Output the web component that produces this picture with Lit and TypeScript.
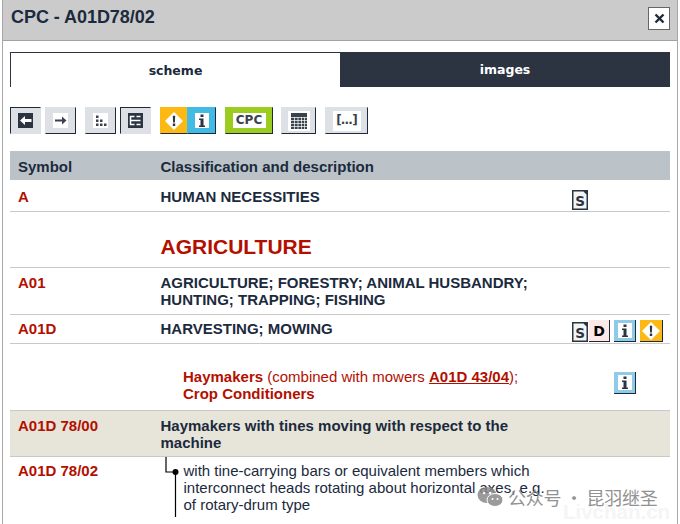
import { LitElement, html, css, svg } from "lit";
import { customElement } from "lit/decorators.js";

const arrowL = svg`<svg width="15" height="15" viewBox="0 0 15 15"><rect width="15" height="15" fill="#2b3440"/><path d="M2 7.500l5-4.500v3h6.500v3H7v3z" fill="#fff"/></svg>`;
const arrowR = svg`<svg width="15" height="15" viewBox="0 0 15 15"><rect width="15" height="15" fill="#fff"/><path d="M13.500 7.500L9 3.500v3H2v2h7v3z" fill="#3a424d"/></svg>`;
const dots = svg`<svg width="15" height="15" viewBox="0 0 15 15"><rect width="15" height="15" fill="#fff"/><path d="M3 2.500h2.500V5H3zM3 6.500h2.500V9H3zM3 10.500h2.500V13H3zM7 6.500h2.500V9H7zM7 10.500h2.500V13H7zM11 10.500h2.500V13H11z" fill="#3a424d"/></svg>`;
const tree = svg`<svg width="15" height="15" viewBox="0 0 15 15"><rect width="15" height="15" fill="#2b3440"/><path d="M2.500 3v9M2 3.500h4.500M2 7.500h10.500M2 11.500h4.500M8.500 3.500h4M8.500 11.500h4" fill="none" stroke="#fff" stroke-width="1.500"/></svg>`;
const warn = svg`<svg width="18" height="18" viewBox="0 0 18 18"><path d="M9 0l9 9-9 9-9-9z" fill="#fff"/><path d="M7.800 3.800h2.400l-.3 6.700H8.100zM7.800 11.600h2.400V14H7.800z" fill="#2b3440"/></svg>`;
const info = svg`<svg width="14" height="15" viewBox="0 0 14 15"><rect width="14" height="15" fill="#fff"/><path d="M5.500 1.500h3v2.500h-3zM4 5.500h4.500v7H10V14H4v-1.500h1.500v-5.500H4z" fill="#2b3440"/></svg>`;
const grid = svg`<svg width="22" height="20" viewBox="0 0 22 20"><rect width="22" height="20" fill="#fff"/><rect x="3" y="2" width="16" height="16" fill="#3a424d"/><path d="M3 6.500h16M3 9.500h16M3 12.500h16M3 15.500h16M6.500 6v12M10 6v12M13.500 6v12M16.500 6v12" stroke="#fff" stroke-width=".7"/></svg>`;
const sDoc = svg`<svg width="16" height="20" viewBox="0 0 16 20"><path d="M.75.75h11l3.500 3.500v15H.75z" fill="#f3f5f5" stroke="#2b3440" stroke-width="1.500"/><path d="M11 0h5v5z" fill="#2b3440"/><text x="8" y="15.500" text-anchor="middle" font-family="DejaVu Sans, sans-serif" font-weight="700" font-size="13.500" fill="#2b3440">S</text></svg>`;

@customElement("app-root")
export class AppRoot extends LitElement {
  static styles = css`
    :host { display: block; width: 680px; height: 524px; overflow: hidden; background: #fff; font-family: "Liberation Sans", Arial, sans-serif; color: #1b2a3d; position: relative; }
    .dialog { width: 676px; height: 524px; box-sizing: border-box; margin-left: 2px; border-left: 1px solid #a8a8a8; border-right: 1px solid #a8a8a8; overflow: hidden; }
    .head { height: 41px; box-sizing: border-box; background: #cbcbcb; border-bottom: 1px solid #a3a3a3; display: flex; justify-content: space-between; padding: 7px 7px 0 8px; }
    .head h1 { margin: 0; font-size: 18px; line-height: 20px; font-weight: 700; letter-spacing: -.05px; }
    .close { width: 22px; height: 23px; box-sizing: border-box; background: #fff; border: 1px solid #666; display: flex; align-items: center; justify-content: center; }
    .body { padding: 11px 7px 0; }
    .tabs { display: flex; height: 35px; }
    .tab { width: 330px; box-sizing: border-box; display: flex; align-items: center; justify-content: center; font: 700 12.500px "DejaVu Sans", sans-serif; }
    .tab.on { background: #fff; border: 1px solid #2b3440; border-width: 1px 0 0 1px; }
    .tab.off { background: #2b3440; color: #fff; }
    .toolbar { display: flex; align-items: flex-start; height: 27px; margin-top: 20px; }
    .btn { box-sizing: border-box; height: 27px; background: #dde0e4; border: 1px solid #dde0e4; border-right: 1px solid #1e2a3a; border-bottom: 1px solid #1e2a3a; display: flex; align-items: center; justify-content: center; width: 31px; }
    .btn.down { border: 1px solid #dde0e4; border-top-color: #1e2a3a; border-left-color: #1e2a3a; }
    .g3 { margin-left: 4px; } .g9 { margin-left: 9px; } .g8 { margin-left: 8px; }
    .warn { background: #fdb913; width: 27px; border-color: #fdb913; border-bottom-color: #1e2a3a; border-right: 0; }
    .inf { background: #41bbe4; width: 29px; border-color: #41bbe4; border-bottom-color: #1e2a3a; border-right-color: #1e2a3a; }
    .cpc { background: #9ccc1f; width: 48px; border-color: #9ccc1f; border-bottom-color: #1e2a3a; border-right-color: #1e2a3a; }
    .cpc span { background: #fff; width: 33px; height: 15px; font: 700 12px/15px "DejaVu Sans", sans-serif; color: #3a424d; text-align: center; }
    .wide { width: 35px; } .wider { width: 43px; }
    .more { background: #fff; width: 28px; height: 20px; font: 700 12px/19px "DejaVu Sans", sans-serif; color: #3a424d; text-align: center; white-space: nowrap; letter-spacing: -.8px; }

    .table { margin-top: 17px; width: 660px; font-size: 15px; line-height: 17px; }
    .row { display: grid; grid-template-columns: 142.500px 1fr; box-sizing: border-box; border-bottom: 1px solid #c8c8c8; position: relative; padding-left: 8px; }
    .hdr { background: #bcc3c8; height: 29px; align-items: center; font-weight: 700; border: 0; padding-top: 1px; }
    .sym { color: #b30f00; font-weight: 700; }
    .txt { font-weight: 700; }
    .r-a { height: 32px; padding-top: 8px; }
    .r-ag { height: 56px; padding-top: 23px; }
    .ag { grid-column: 2; color: #b30f00; font-weight: 700; font-size: 21px; line-height: 23px; }
    .r-a01 { height: 47px; padding-top: 6px; }
    .r-a01d { height: 29px; padding-top: 5px; }
    .note { box-sizing: border-box; height: 66px; padding: 24px 0 0 173px; color: #b30f00; position: relative; }
    .note u { text-decoration-thickness: 1px; }
    .hl { height: 47px; background: #e7e5d9; border-top: 1px solid #c8c8c8; border-bottom: 1px solid #c8c8c8; padding-top: 6px; }
    .last { height: 68px; padding-top: 5px; border: 0; }
    .leaf { padding-left: 23px; }
    .branch { position: absolute; left: 153.500px; top: 0; }
    .sicon { position: absolute; right: 82px; top: 10px; line-height: 0; }
    .icons { position: absolute; right: 7px; top: 5px; display: flex; align-items: flex-start; }
    .doc { line-height: 0; margin-top: 2px; margin-right: 1px; }
    .ib { box-sizing: border-box; width: 22px; height: 22px; display: flex; align-items: center; justify-content: center; border-right: 1px solid #1e2a3a; border-bottom: 1px solid #1e2a3a; }
    .ib.i { background: #8ecbe8; }
    .ib.w { background: #fdb913; width: 23px; margin-left: 4px; }
    .ib.d { background: #fde8e8; font: 900 14px/1 "DejaVu Sans", sans-serif; color: #000; width: 21px; margin-right: 4px; }
    .note .ib { position: absolute; left: 604px; top: 28px; }
    .mark { position: absolute; left: 477px; top: 484px; display: flex; align-items: center; gap: 5px; color: #808080; font: 18px "Noto Sans CJK SC", sans-serif; letter-spacing: -.25px; opacity: .85; }
    .ghost { position: absolute; left: 563px; top: 500px; font: 700 20.500px "Liberation Sans", sans-serif; color: #f5f5f5; }
  `;

  render() {
    return html`
      <div class="dialog">
        <div class="head">
          <h1>CPC - A01D78/02</h1>
          <div class="close"><svg width="11" height="11" viewBox="0 0 11 11"><path d="M1.500 1.500l8 8M9.500 1.500l-8 8" stroke="#1e2a3a" stroke-width="2.400"/></svg></div>
        </div>
        <div class="body">
          <div class="tabs"><div class="tab on">scheme</div><div class="tab off">images</div></div>
          <div class="toolbar">
            <div class="btn down">${arrowL}</div>
            <div class="btn g3">${arrowR}</div>
            <div class="btn g9">${dots}</div>
            <div class="btn down g3">${tree}</div>
            <div class="btn warn g9">${warn}</div>
            <div class="btn inf">${info}</div>
            <div class="btn cpc g9"><span>CPC</span></div>
            <div class="btn wide g8">${grid}</div>
            <div class="btn wider g9"><span class="more">[...]</span></div>
          </div>
          <div class="table">
            <div class="row hdr"><span>Symbol</span><span>Classification and description</span></div>
            <div class="row r-a"><span class="sym">A</span><span class="txt">HUMAN NECESSITIES</span><span class="sicon">${sDoc}</span></div>
            <div class="row r-ag"><span class="ag">AGRICULTURE</span></div>
            <div class="row r-a01"><span class="sym">A01</span><span class="txt">AGRICULTURE; FORESTRY; ANIMAL HUSBANDRY;<br>HUNTING; TRAPPING; FISHING</span></div>
            <div class="row r-a01d"><span class="sym">A01D</span><span class="txt">HARVESTING; MOWING</span>
              <div class="icons">
                <span class="doc">${sDoc}</span>
                <span class="ib d">D</span>
                <span class="ib i">${info}</span>
                <span class="ib w">${warn}</span>
              </div>
            </div>
            <div class="note">
              <b>Haymakers</b> (combined with mowers <b><u>A01D 43/04</u></b>);<br><b>Crop Conditioners</b>
              <span class="ib i">${info}</span>
            </div>
            <div class="row hl"><span class="sym">A01D 78/00</span><span class="txt">Haymakers with tines moving with respect to the<br>machine</span></div>
            <div class="row last"><span class="sym">A01D 78/02</span>
              <span class="leaf">with tine-carrying bars or equivalent members which<br>interconnect heads rotating about horizontal axes, e.g.<br>of rotary-drum type</span>
              <svg class="branch" width="20" height="61" viewBox="0 0 20 61"><path d="M2 0v15h9.500M11.500 15v45" fill="none" stroke="#000" stroke-width="1.200"/><circle cx="11.500" cy="15" r="3" fill="#000"/></svg>
            </div>
          </div>
        </div>
      </div>
      <div class="ghost">Livchan.cn</div>
      <div class="mark">
        <svg width="26" height="20" viewBox="0 0 26 20"><ellipse cx="10" cy="8" rx="9.500" ry="8" fill="#8a8a8a"/><circle cx="7" cy="6" r="1.300" fill="#fff"/><circle cx="13" cy="6" r="1.300" fill="#fff"/><ellipse cx="18" cy="13" rx="8" ry="6.500" fill="#8a8a8a" stroke="#fff" stroke-width="1"/><circle cx="15.500" cy="12" r="1" fill="#fff"/><circle cx="20.500" cy="12" r="1" fill="#fff"/></svg>
        <span>公众号 · 昆羽继圣</span>
      </div>
    `;
  }
}
